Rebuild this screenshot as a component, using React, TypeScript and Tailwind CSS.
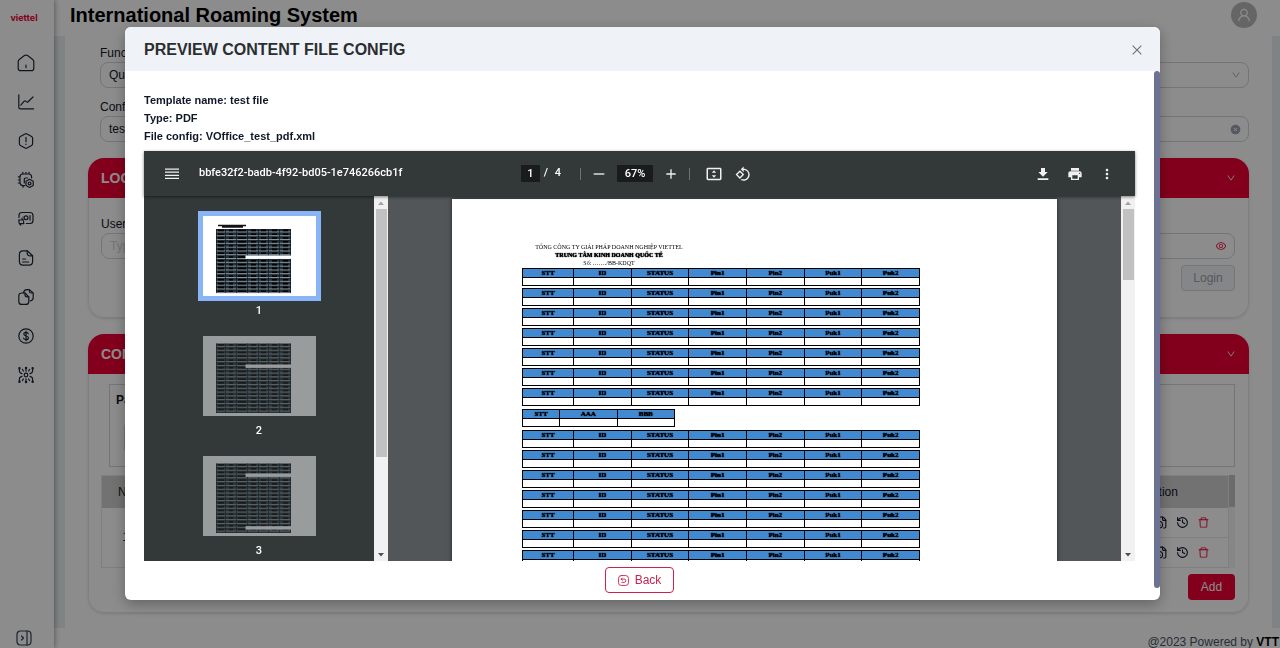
import type { ReactNode } from "react";
import {
  AiFillCloseCircle,
  AiOutlineClose,
  AiOutlineDelete,
  AiOutlineDown,
  AiOutlineEye,
  AiOutlineUser,
} from "react-icons/ai";
import { FileClock, History } from "lucide-react";

//SIDEBAR
const menu: { name: string; icon: ReactNode }[] = [
  {
    name: "Home",
    icon: (
      <>
        <path d="M7.4 1.6 2.3 5.5C1.5 6.1 1.2 6.7 1.2 7.6v6.6c0 1.6.9 2.5 2.5 2.5h10.6c1.6 0 2.5-.9 2.5-2.5V7.6c0-.9-.3-1.5-1.1-2.1l-5.1-3.9c-1-.7-2.2-.7-3.2 0z" />
        <path d="M9 11v2.6" />
      </>
    ),
  },
  {
    name: "Statistics",
    icon: (
      <>
        <path d="M1.8 1.8v12.4c0 1 .6 1.6 1.6 1.6h13.2" />
        <path d="m3.8 12.2 3.4-4c.5-.5 1-.5 1.5-.1l.9.8c.5.4 1.1.4 1.5-.1L16 4" />
      </>
    ),
  },
  {
    name: "Alerts",
    icon: (
      <>
        <path d="M8 1.9c.6-.4 1.4-.4 2 0l4.6 2.7c.7.4 1 1 1 1.7v5.4c0 .7-.3 1.3-1 1.7L10 16.1c-.6.4-1.4.4-2 0l-4.6-2.7c-.7-.4-1-1-1-1.7V6.3c0-.7.3-1.3 1-1.7z" />
        <path d="M9 5.4v4.4M9 12.2v.4" />
      </>
    ),
  },
  {
    name: "Devices",
    icon: (
      <>
        <path d="M7.6 14.6H6c-2 0-3-1-3-3V6c0-2 1-3 3-3h5.6c2 0 3 1 3 3v1M5.8 3V1.3M9 3V1.3M12 3V1.3M3 5.8H1.3M3 9H1.3M3 12H1.3M6 14.6v1.6" />
        <path d="M7.3 12V8.2c0-.8.4-1.2 1.2-1.2h2.2" />
        <path d="m12.6 8.3 3.6 2v4.2l-3.6 2-3.6-2v-4.2z" />
        <circle cx="12.6" cy="12.4" r="1.4" />
      </>
    ),
  },
  {
    name: "Data",
    icon: (
      <>
        <path d="M2 7.6V5.5c0-2 1-3 3-3h8c2 0 3 1 3 3v5c0 2-1 3-3 3H9.4" />
        <circle cx="9" cy="7.8" r="1.9" />
        <path d="M13 5.6v4.6M5.8 7h.1M1.6 10h4.6M4.8 8.6 6.4 10M7 13.6H2.4M3.8 15.2l-1.6-1.6M2 10v2.4M6.6 11.4v2" />
      </>
    ),
  },
  {
    name: "Documents",
    icon: (
      <>
        <path d="M10.2 1.8H6C3.6 1.8 2.4 3 2.4 5.4v7.2c0 2.4 1.2 3.6 3.6 3.6h6c2.4 0 3.6-1.2 3.6-3.6V6.8z" />
        <path d="M10.2 1.8v2.4c0 1.8.8 2.6 2.6 2.6h2.8M5.6 10h3M5.6 13h6" />
      </>
    ),
  },
  {
    name: "Copies",
    icon: (
      <>
        <path d="M8 5H4.8C2.8 5 1.8 6 1.8 8v5.4c0 2 1 3 3 3h4c2 0 3-1 3-3V8.8z" />
        <path d="M8 5v1.8c0 1.4.6 2 2 2h1.8M6.6 4.8C6.8 2.8 7.6 1.6 9.8 1.6h2.6L16.2 5v4.4c0 2.4-1 3.2-3 3.4M12.4 1.6v1.6c0 1.2.6 1.8 1.8 1.8h2" />
      </>
    ),
  },
  {
    name: "Billing",
    icon: (
      <>
        <circle cx="9" cy="9" r="7.2" />
        <path d="M11.2 6.8c-.2-1-1-1.4-2.2-1.4s-2.2.6-2.2 1.7c0 2.5 4.6 1.3 4.6 3.8 0 1.1-1 1.7-2.4 1.7s-2.3-.5-2.5-1.6M9 4.200v9.600" />
      </>
    ),
  },
  {
    name: "Network",
    icon: (
      <>
        <circle cx="9" cy="9" r="1.8" />
        <path d="M9 3v2.200M9 12.800V15M2.400 3v2c0 1.600.9 2.200 2.600 2.600M15.600 3v2c0 1.600-.9 2.200-2.600 2.600M2.400 15v-2c0-1.600.9-2.200 2.600-2.600M15.600 15v-2c0-1.600-.9-2.200-2.600-2.600M5.400 3.400 6.400 5M12.600 3.400 11.600 5M5.400 14.600l1-1.600M12.600 14.600l-1-1.600" />
        <path strokeWidth="2.4" d="M2.400 2.200h.1M9 2h.1M15.600 2.200h.1M2.400 15.800h.1M9 16h.1M15.600 15.800h.1" />
      </>
    ),
  },
];

function Sidebar() {
  return (
    <nav className="z-10 flex w-[54px] shrink-0 flex-col items-center bg-white pr-[6px] shadow-[1px_0_5px_rgba(0,0,0,0.35)]">
      <a href="#home" className="mt-2 mb-[26px] font-['Inter'] text-[9px] leading-5 font-bold text-[#ee0033]">
        viettel
      </a>
      <div className="flex flex-col gap-[21px] pl-1">
        {menu.map((item) => (
          <a key={item.name} href={"#" + item.name} aria-label={item.name}>
            <svg viewBox="0 0 18 18" className="size-[18px] fill-none stroke-gray-800" strokeWidth="1.2" strokeLinecap="round" strokeLinejoin="round">
              {item.icon}
            </svg>
          </a>
        ))}
      </div>
      <button aria-label="Expand menu" className="mt-auto mb-[2px]">
        <svg viewBox="0 0 16 16" className="size-4 fill-none stroke-gray-700" strokeWidth="1.2" strokeLinecap="round" strokeLinejoin="round">
          <rect x="1" y="1" width="14" height="14" rx="3.5" />
          <path d="M11 1v14M5.5 6l2 2-2 2" />
        </svg>
      </button>
    </nav>
  );
}

function Card({ title, children }: { title: string; children: ReactNode }) {
  return (
    <section className="mt-4 overflow-hidden rounded-2xl shadow-sm">
      <h2 className="flex h-10 items-center justify-between bg-[#ee0033] px-[13px] text-sm font-bold text-white">
        {title}
        <AiOutlineDown className="size-[10px]" />
      </h2>
      <div className="flex flex-col rounded-b-2xl border border-t-0 border-gray-200 pr-[13px] pl-3">{children}</div>
    </section>
  );
}

function RowActions() {
  return (
    <div className="flex items-center justify-end gap-2 pr-[18px]">
      <button aria-label="Log"><FileClock className="size-[13px]" /></button>
      <button aria-label="History"><History className="size-[13px]" /></button>
      <button aria-label="Delete" className="text-[#ee0033]"><AiOutlineDelete className="size-[13px]" /></button>
    </div>
  );
}

function Page() {
  return (
    <div className="flex h-screen overflow-hidden bg-white">
      <Sidebar />
      <div className="flex min-w-0 flex-1 flex-col">
        <header className="flex h-9 shrink-0 items-center justify-between pr-[23px] pb-[6px] pl-4">
          <h1 className="text-xl font-bold text-black">International Roaming System</h1>
          <span className="flex size-[26px] items-center justify-center rounded-full bg-[#b9b9b9] text-white">
            <AiOutlineUser className="size-4" />
          </span>
        </header>

        <main className="min-h-0 flex-1 border-r-8 border-l-[11px] border-[#e9eef0] bg-white px-[23px]">
          <div className="flex flex-col pt-2 pl-3">
            <label htmlFor="func" className="leading-[18px]">Function</label>
            <div className="grid items-center">
              <select id="func" className="col-start-1 row-start-1 h-[26px] appearance-none rounded-lg border border-gray-300 px-2">
                <option>Query</option>
              </select>
              <AiOutlineDown className="col-start-1 row-start-1 mr-2 size-[10px] justify-self-end text-gray-400" />
            </div>
            <label htmlFor="conf" className="mt-[10px] leading-[18px]">Config</label>
            <div className="grid items-center">
              <input id="conf" defaultValue="test file" className="col-start-1 row-start-1 h-[26px] rounded-lg border border-gray-300 px-2" />
              <AiFillCloseCircle className="col-start-1 row-start-1 mr-2 size-[11px] justify-self-end text-gray-400" />
            </div>
          </div>

          <Card title="LOGIN">
            <label htmlFor="user" className="mt-[17px] leading-[18px]">Username</label>
            <div className="grid items-center">
              <input id="user" placeholder="Type here" className="col-start-1 row-start-1 h-[26px] rounded-lg border border-gray-300 px-2 placeholder:text-gray-300" />
              <AiOutlineEye className="col-start-1 row-start-1 mr-2 size-3 justify-self-end text-[#ee0033]" />
            </div>
            <button className="mt-[6px] mb-[26px] h-[26px] w-[54px] self-end rounded border border-gray-300 bg-gray-100 text-gray-400">
              Login
            </button>
          </Card>

          <Card title="CONFIG LIST">
            <div className="mt-[10px] ml-2 border border-gray-300 px-[6px] pt-[6px] pb-[13px]">
              <p className="leading-[18px] font-bold">Parameters</p>
              <div className="mx-2 mt-[14px] h-[30px] w-1/2 rounded border border-gray-300"></div>
            </div>
            <div className="mt-2 flex">
              <table className="w-full border border-gray-200">
                <thead>
                  <tr className="h-8 bg-[#d0d0d0]">
                    <th className="w-12 font-medium">No</th>
                    <th className="font-medium">Name</th>
                    <th className="w-[134px] font-medium">Action</th>
                  </tr>
                </thead>
                <tbody>
                  <tr className="h-[30px] border-b border-gray-200">
                    <td rowSpan={2} className="text-center">1</td>
                    <td></td>
                    <td><RowActions /></td>
                  </tr>
                  <tr className="h-[30px]">
                    <td></td>
                    <td><RowActions /></td>
                  </tr>
                </tbody>
              </table>
              <div className="w-[6px] shrink-0 border-t-[32px] border-[#c4c4c4] bg-gray-100"></div>
            </div>
            <button className="mt-[6px] mb-3 h-[26px] w-[47px] self-end rounded bg-[#ee0033] text-white">Add</button>
          </Card>
        </main>

        <footer className="h-5 shrink-0 pt-1 pr-px text-right leading-5 whitespace-nowrap text-gray-600">
          @2023 Powered by <b className="text-black">VTT</b>
        </footer>
      </div>
    </div>
  );
}

//PDF VIEWER
const simColumns = ["STT", "ID", "STATUS", "Pin1", "Pin2", "Puk1", "Puk2"];
const simTables = [0, 1, 2, 3, 4, 5, 6];

function PdfTable({ columns, small }: { columns: string[]; small?: boolean }) {
  return (
    <table className={small ? "w-[153px] table-fixed border-collapse" : "w-[398px] table-fixed border-collapse"}>
      <thead>
        <tr className="h-[9px] bg-[#4189d0]">
          {columns.map((col, i) => (
            <th
              key={col}
              className={
                "h-[9px] border border-black p-0 text-[7px] leading-[8px] font-bold text-shadow-[0_0_1px_black,0_0_1px_black] " +
                (i > 0 ? "" : small ? "w-[37px]" : "w-[51px]")
              }
            >
              {col}
            </th>
          ))}
        </tr>
      </thead>
      <tbody>
        <tr>
          {columns.map((col) => (
            <td key={col} className="h-2 border border-black p-0"></td>
          ))}
        </tr>
      </tbody>
    </table>
  );
}

function Thumb({ page, top, gaps, active }: { page: number; top: number; gaps: number[]; active?: boolean }) {
  const lines = [];
  for (let y = top; y < 75; y += 3.8) lines.push(y);
  return (
    <button className="flex h-[120px] shrink-0 flex-col items-center">
      <span className={active ? "bg-white outline-[5px] outline-[#8ab4f8]" : "bg-white opacity-50"}>
        <svg viewBox="0 0 113 80" className="h-20 w-[113px]">
          {active && <path d="M15 9.5h28M19 11h21" stroke="#111" strokeWidth="1.5" />}
          <rect x="13" y={top} width="75" height={77 - top} fill="#1f2e3a" />
          {lines.map((y) => (
            <g key={y}>
              <path d={`M13 ${y + 2.9}h75`} stroke="#8d9498" />
              <path d={`M15 ${y + 1.4}h6M26 ${y + 1.4}h4M35 ${y + 1.4}h8M48 ${y + 1.4}h5M58 ${y + 1.4}h5M69 ${y + 1.4}h5M80 ${y + 1.4}h5`} stroke="#000" strokeWidth="1.6" />
            </g>
          ))}
          <path d={`M13.5 ${top}V77M22.5 ${top}V77M33.5 ${top}V77M44.5 ${top}V77M55.5 ${top}V77M65.5 ${top}V77M76.5 ${top}V77M87.5 ${top}V77`} stroke="#0d151b" strokeWidth="0.7" />
          {gaps.map((y) => (
            <rect key={y} x="42.5" y={y} width="46" height="3.4" fill="#fff" />
          ))}
        </svg>
      </span>
      <span className="mt-2 text-[11px] leading-[14px] font-medium text-white">{page}</span>
    </button>
  );
}

function ScrollBar({ thumb }: { thumb: string }) {
  return (
    <div className="flex w-[14px] shrink-0 flex-col items-center bg-[#f1f1f1]">
      <svg viewBox="0 0 14 13" className="h-[13px] w-[14px] shrink-0"><path d="M4 9h6L7 5.5z" fill="#a3a3a3" /></svg>
      <div className={"w-[11px] bg-[#c1c1c1] " + thumb}></div>
      <svg viewBox="0 0 14 13" className="mt-auto h-[13px] w-[14px] shrink-0"><path d="M4 5h6L7 8.5z" fill="#505050" /></svg>
    </div>
  );
}

function ToolButton({ label, wide, d }: { label: string; wide: string; d: string }) {
  return (
    <button aria-label={label} className={"flex items-center justify-center " + wide}>
      <svg viewBox="0 0 24 24" className="size-4 fill-[#f1f1f1]"><path d={d} /></svg>
    </button>
  );
}

function PdfViewer() {
  return (
    <div className="flex h-[410px] flex-col bg-[#525658] font-['Roboto',sans-serif] text-[11px] text-white">
      <div className="z-10 grid h-[45px] shrink-0 grid-cols-[1fr_auto_1fr] items-center bg-[#333838] font-medium shadow-[0_1px_3px_rgba(0,0,0,0.5)]">
        <div className="flex items-center pl-[18px]">
          <button aria-label="Menu">
            <svg viewBox="0 0 20 20" className="size-5 fill-[#f1f1f1]">
              <path d="M3 4.5h14v1.200H3zM3 7.600h14v1.200H3zM3 10.700h14v1.200H3zM3 13.800h14V15H3z" />
            </svg>
          </button>
          <span className="ml-[17px] whitespace-nowrap">bbfe32f2-badb-4f92-bd05-1e746266cb1f</span>
        </div>
        <div className="flex items-center">
          <input aria-label="Page" defaultValue="1" className="h-[17px] w-[19px] bg-[#191b1c] text-center" />
          <span className="w-3 text-center">/</span>
          <span className="w-3 text-center">4</span>
          <span className="ml-4 h-3 w-px bg-[#6f7274]"></span>
          <ToolButton label="Zoom out" wide="w-9" d="M20 13H4v-2h16z" />
          <input aria-label="Zoom" defaultValue="67%" className="h-[17px] w-9 bg-[#191b1c] text-center" />
          <ToolButton label="Zoom in" wide="w-9" d="M19 13h-6v6h-2v-6H5v-2h6V5h2v6h6z" />
          <span className="h-3 w-px bg-[#6f7274]"></span>
          <button aria-label="Fit to page" className="ml-[10px] flex w-7 justify-center">
            <svg viewBox="0 0 16 14" className="h-[14px] w-4 fill-[#f1f1f1]">
              <path fillRule="evenodd" d="M2 .8h12c.8 0 1.500.6 1.500 1.400v9.600c0 .8-.7 1.400-1.500 1.400H2c-.8 0-1.500-.6-1.500-1.400V2.200C.5 1.400 1.200.8 2 .8zm0 1.500v9.400h12V2.300zM8 3.200l2.200 2.500H5.800zM8 10.800 5.800 8.300h4.400z" />
            </svg>
          </button>
          <ToolButton
            label="Rotate"
            wide="w-[30px]"
            d="M7.34 6.41.86 12.9l6.49 6.48 6.49-6.48-6.5-6.49zM3.69 12.9l3.66-3.66L11 12.9l-3.66 3.66-3.65-3.66zm15.67-6.26C17.61 4.88 15.3 4 13 4V.76L8.76 5 13 9.24V6c1.79 0 3.58.68 4.95 2.05 2.73 2.73 2.73 7.17 0 9.9C16.58 19.32 14.79 20 13 20c-.97 0-1.94-.21-2.84-.61l-1.49 1.49C10.02 21.62 11.51 22 13 22c2.3 0 4.61-.88 6.36-2.64 3.52-3.51 3.52-9.21 0-12.72z"
          />
        </div>
        <div className="flex justify-end pr-3">
          <ToolButton label="Download" wide="w-8" d="M19 9h-4V3H9v6H5l7 7 7-7zM4 18.5V21h16v-2.5H4z" />
          <ToolButton label="Print" wide="w-8" d="M19 8H5c-1.66 0-3 1.34-3 3v6h4v4h12v-4h4v-6c0-1.66-1.34-3-3-3zm-3 11H8v-5h8v5zm3-7c-.55 0-1-.45-1-1s.45-1 1-1 1 .45 1 1-.45 1-1 1zm-1-9H6v4h12V3z" />
          <ToolButton label="More" wide="w-8" d="M12 8c1.1 0 2-.9 2-2s-.9-2-2-2-2 .9-2 2 .9 2 2 2zm0 2c-1.1 0-2 .9-2 2s.9 2 2 2 2-.9 2-2-.9-2-2-2zm0 6c-1.1 0-2 .9-2 2s.9 2 2 2 2-.9 2-2-.9-2-2-2z" />
        </div>
      </div>

      <div className="flex min-h-0 flex-1">
        <aside className="flex w-[230px] shrink-0 flex-col items-center overflow-hidden bg-[#333838] pt-5">
          <Thumb page={1} top={13} gaps={[39.5]} active />
          <Thumb page={2} top={7.5} gaps={[28.5]} />
          <Thumb page={3} top={7.5} gaps={[17.5, 70.2]} />
        </aside>
        <ScrollBar thumb="h-[248px]" />
        <div className="flex flex-1 justify-center overflow-hidden pt-[3px]">
          <div className="h-[700px] w-[605px] shrink-0 bg-white pt-[44px] pl-[70px] font-['Liberation_Serif',serif] text-black shadow-[0_0_4px_rgba(0,0,0,0.6)]">
            <div className="w-[174px] text-center text-[6px] leading-[8px] whitespace-nowrap">
              <p>TỔNG CÔNG TY GIẢI PHÁP DOANH NGHIỆP VIETTEL</p>
              <p className="font-bold text-shadow-[0_0_1px_black,0_0_1px_black]">TRUNG TÂM KINH DOANH QUỐC TẾ</p>
              <p>Số: ……./BB-KDQT</p>
            </div>
            <div className="mt-px flex flex-col gap-[3px]">
              <div className="flex flex-col gap-[2px]">
                {simTables.map((n) => <PdfTable key={n} columns={simColumns} />)}
              </div>
              <PdfTable columns={["STT", "AAA", "BBB"]} small />
              <div className="flex flex-col gap-[2px]">
                {simTables.map((n) => <PdfTable key={n} columns={simColumns} />)}
              </div>
            </div>
          </div>
        </div>
        <ScrollBar thumb="h-[71px]" />
      </div>
    </div>
  );
}

export default function App() {
  return (
    <div className="font-['Liberation_Sans',Arial,sans-serif] text-xs text-gray-900">
      <Page />
      <div className="fixed inset-0 z-20 bg-black/45 pt-[27px] pr-[120px] pl-[125px]">
        <div role="dialog" aria-labelledby="preview-title" className="overflow-hidden rounded-md bg-white shadow-[0_4px_14px_rgba(0,0,0,0.3)]">
          <div className="flex h-11 items-center justify-between bg-[#eff3f7] pt-[2px] pr-4 pl-[19px]">
            <h2 id="preview-title" className="text-base font-bold text-[#2b2e31]">PREVIEW CONTENT FILE CONFIG</h2>
            <button aria-label="Close" className="text-gray-500"><AiOutlineClose className="size-[14px]" /></button>
          </div>
          <div className="flex">
            <div className="min-w-0 flex-1 pt-5 pr-[19px] pb-[7px] pl-[19px]">
              <div className="mb-[6px] text-[11px] leading-[18px] font-bold">
                <p>Template name: test file</p>
                <p>Type: PDF</p>
                <p>File config: VOffice_test_pdf.xml</p>
              </div>
              <PdfViewer />
              <div className="mt-[6px] flex justify-center">
                <button className="flex h-[26px] w-[69px] items-center justify-center gap-[6px] rounded border border-[#c8234e] text-[#c8234e]">
                  <svg viewBox="0 0 12 12" className="size-[11px] fill-none stroke-current" strokeLinecap="round" strokeLinejoin="round">
                    <rect x="0.6" y="0.6" width="10.8" height="10.8" rx="3" />
                    <path d="M3.5 4.5h3.3a1.7 1.7 0 0 1 0 3.5H4.2M4.6 3.3 3.4 4.5l1.2 1.200" />
                  </svg>
                  Back
                </button>
              </div>
            </div>
            <div className="mb-3 w-[6px] rounded-full bg-[#6c7293]"></div>
          </div>
        </div>
      </div>
    </div>
  );
}
